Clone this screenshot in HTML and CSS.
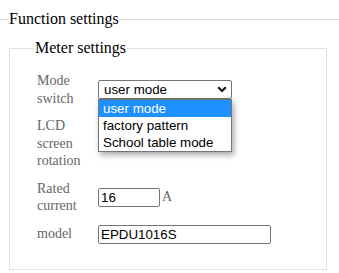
FILE: index.html
```html
<!DOCTYPE html>
<html lang="en">
<head>
    <meta charset="UTF-8">
    <meta name="viewport" content="width=device-width, initial-scale=1.0">
    <title>Function settings</title>
    <link rel="stylesheet" href="styles.css">
</head>
<body>

    <fieldset class="group">
        <legend>Function settings</legend>

        <fieldset class="panel">
            <legend>Meter settings</legend>

            <div class="form">
                <label class="label">Mode switch</label>
                <div class="field">
                    <div class="select">
                        <span>user mode</span>
                        <svg class="chevron" width="10" height="7" viewBox="0 0 10 7">
                            <path d="M1.2 1.3 L5 5 L8.8 1.3" fill="none" stroke="#111" stroke-width="2.2"/>
                        </svg>
                        <ul class="dropdown">
                            <li class="active">user mode</li>
                            <li>factory pattern</li>
                            <li>School table mode</li>
                        </ul>
                    </div>
                </div>

                <label class="label">LCD screen rotation</label>
                <div class="field"></div>

                <label class="label">Rated current</label>
                <div class="field">
                    <input class="input short" type="text" value="16"><span class="unit">A</span>
                </div>

                <label class="label">model</label>
                <div class="field">
                    <input class="input long" type="text" value="EPDU1016S">
                </div>
            </div>
        </fieldset>
    </fieldset>

</body>
</html>
```

FILE: styles.css
```css
body {
    margin: 0;
    background-color: #fff;
    font-family: "Liberation Serif", "Times New Roman", serif;
    color: #000;
}
.group {
    margin: 10px 0 0 0;
    padding: 0 12px 0 9px;
    border: none;
    border-top: 1px solid #ddd;
}
.group > legend {
    padding: 0;
    font-size: 16px;
}
.panel {
    margin: 11px 0 0 0;
    padding: 15px 10px 25px 27px;
    border: 1px solid #e3e3e3;
}
.panel > legend {
    padding: 0;
    margin-left: -2px;
    font-size: 16px;
}
.form {
    display: grid;
    grid-template-columns: 56px 1fr;
    column-gap: 5px;
    row-gap: 10px;
    align-items: center;
}
.label {
    font-size: 14px;
    line-height: 17.5px;
    color: #666;
}
.field {
    display: flex;
    align-items: center;
}
.select {
    position: relative;
    box-sizing: border-box;
    width: 134px;
    height: 19px;
    padding: 0 4px 0 5px;
    border: 1px solid #767676;
    border-radius: 2px;
    display: flex;
    align-items: center;
    justify-content: space-between;
    font-family: "Liberation Sans", Arial, sans-serif;
    font-size: 13.33px;
}
.dropdown {
    position: absolute;
    left: -1px;
    top: 18px;
    width: 134px;
    box-sizing: border-box;
    margin: 0;
    padding: 0;
    list-style: none;
    background-color: #fff;
    border: 1px solid #767676;
    box-shadow: 2px 3px 6px rgba(0, 0, 0, 0.35);
}
.dropdown li {
    height: 17px;
    line-height: 17px;
    padding-left: 4px;
    color: #000;
}
.dropdown li.active {
    background-color: #1e90ff;
    color: #fff;
}
.input {
    box-sizing: border-box;
    height: 19px;
    margin: 0;
    padding: 0 2px;
    border: 1px solid #767676;
    border-radius: 2px;
    font-family: "Liberation Sans", Arial, sans-serif;
    font-size: 13.33px;
    color: #000;
}
.short {
    width: 62px;
}
.long {
    width: 173px;
}
.unit {
    margin-left: 2px;
    font-size: 14px;
    color: #666;
}
```
